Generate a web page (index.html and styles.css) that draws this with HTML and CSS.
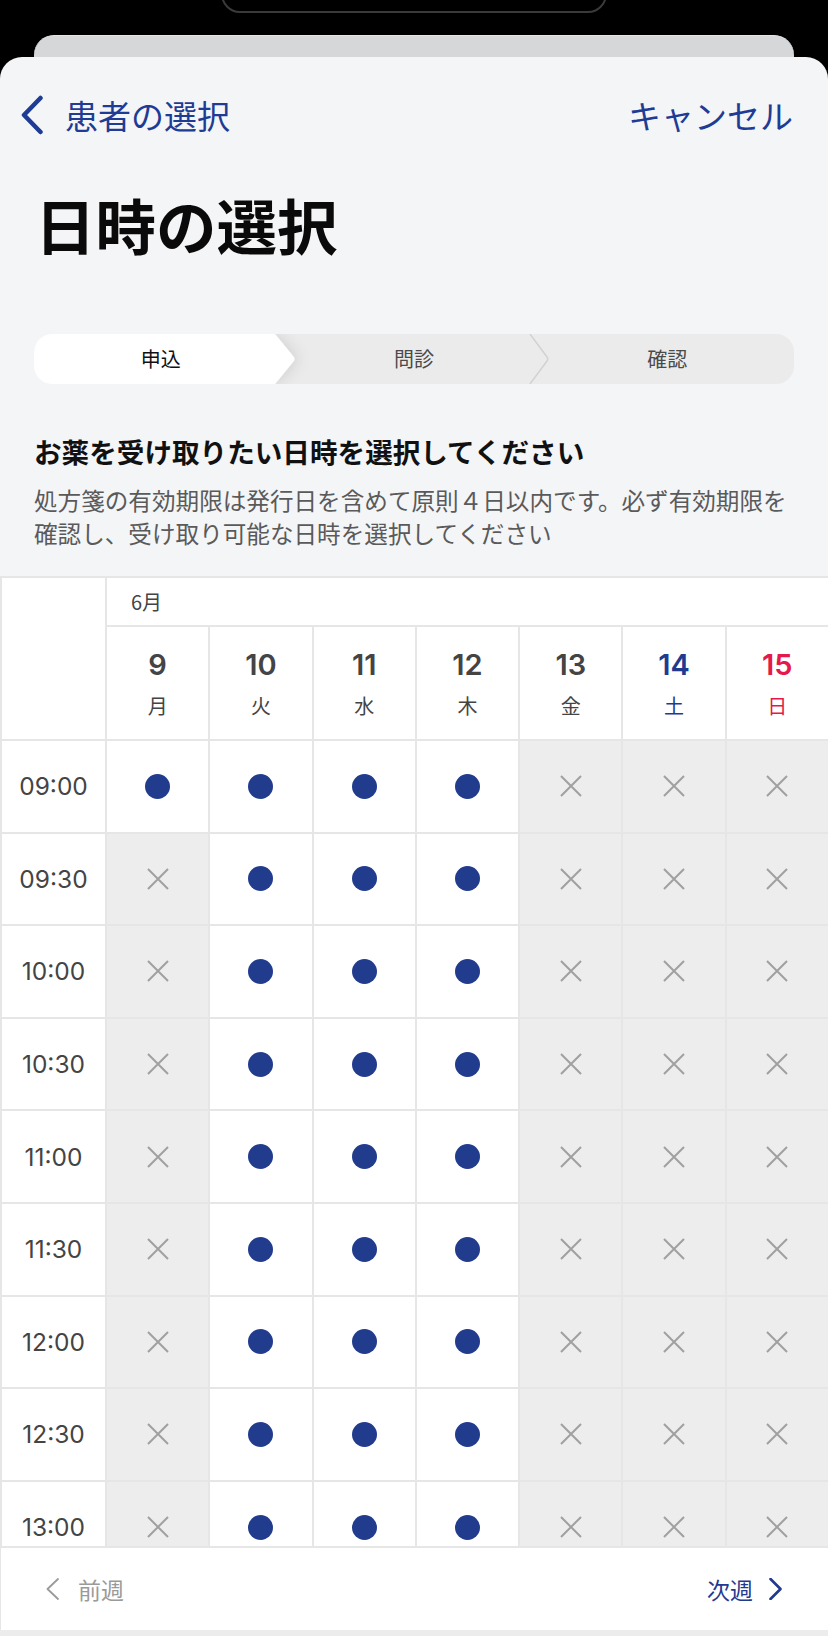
FILE: index.html
```html
<!DOCTYPE html>
<html lang="ja">
<head>
<meta charset="utf-8">
<title>日時の選択</title>
<link rel="stylesheet" href="styles.css">
</head>
<body>
<div class="device">
  <div class="notch"></div>
  <div class="back-card"></div>
  <div class="sheet">
    <nav class="nav">
      <a class="nav-back">
        <svg class="nav-chevron" width="24" height="40" viewBox="0 0 24 40"><path d="M20.5 3 L4 20 L20.5 37" fill="none" stroke="currentColor" stroke-width="4.5" stroke-linecap="round" stroke-linejoin="round"/></svg>
        <span>患者の選択</span>
      </a>
      <a class="nav-cancel">キャンセル</a>
    </nav>

    <h1 class="title">日時の選択</h1>

    <div class="steps">
      <svg class="steps-bg" width="760" height="50" viewBox="0 0 760 50">
        <defs>
          <filter id="sh" x="-10%" y="-50%" width="130%" height="200%">
            <feDropShadow dx="4" dy="0" stdDeviation="7" flood-color="#000" flood-opacity="0.10"/>
          </filter>
        </defs>
        <path d="M0 0 H241 L259.5 22.5 Q261.5 25 259.5 27.5 L241 50 H0 Z" fill="#fff" filter="url(#sh)"/>
        <path d="M496 0 L513 23 Q514.5 25 513 27 L496 50" fill="none" stroke="#d2d2d2" stroke-width="1.5"/>
      </svg>
      <div class="step step-active">申込</div>
      <div class="step">問診</div>
      <div class="step">確認</div>
    </div>

    <h2 class="lead">お薬を受け取りたい日時を選択してください</h2>
    <p class="note">処方箋の有効期限は発行日を含めて原則４日以内です。必ず有効期限を確認し、受け取り可能な日時を選択してください</p>

    <div class="table-wrap">
      <div class="grid">
        <div class="corner"></div>
        <div class="month">6月</div>

        <div class="day"><span class="day-num">9</span><span class="day-wk">月</span></div>
        <div class="day"><span class="day-num">10</span><span class="day-wk">火</span></div>
        <div class="day"><span class="day-num">11</span><span class="day-wk">水</span></div>
        <div class="day"><span class="day-num">12</span><span class="day-wk">木</span></div>
        <div class="day"><span class="day-num">13</span><span class="day-wk">金</span></div>
        <div class="day day-sat"><span class="day-num">14</span><span class="day-wk">土</span></div>
        <div class="day day-sun"><span class="day-num">15</span><span class="day-wk">日</span></div>

        <div class="time">09:00</div>
        <div class="slot ok"><i class="dot"></i></div>
        <div class="slot ok"><i class="dot"></i></div>
        <div class="slot ok"><i class="dot"></i></div>
        <div class="slot ok"><i class="dot"></i></div>
        <div class="slot ng"><svg class="x" viewBox="0 0 22 22"><path d="M1 1 L21 21 M21 1 L1 21"/></svg></div>
        <div class="slot ng"><svg class="x" viewBox="0 0 22 22"><path d="M1 1 L21 21 M21 1 L1 21"/></svg></div>
        <div class="slot ng"><svg class="x" viewBox="0 0 22 22"><path d="M1 1 L21 21 M21 1 L1 21"/></svg></div>

        <div class="time">09:30</div>
        <div class="slot ng"><svg class="x" viewBox="0 0 22 22"><path d="M1 1 L21 21 M21 1 L1 21"/></svg></div>
        <div class="slot ok"><i class="dot"></i></div>
        <div class="slot ok"><i class="dot"></i></div>
        <div class="slot ok"><i class="dot"></i></div>
        <div class="slot ng"><svg class="x" viewBox="0 0 22 22"><path d="M1 1 L21 21 M21 1 L1 21"/></svg></div>
        <div class="slot ng"><svg class="x" viewBox="0 0 22 22"><path d="M1 1 L21 21 M21 1 L1 21"/></svg></div>
        <div class="slot ng"><svg class="x" viewBox="0 0 22 22"><path d="M1 1 L21 21 M21 1 L1 21"/></svg></div>

        <div class="time">10:00</div>
        <div class="slot ng"><svg class="x" viewBox="0 0 22 22"><path d="M1 1 L21 21 M21 1 L1 21"/></svg></div>
        <div class="slot ok"><i class="dot"></i></div>
        <div class="slot ok"><i class="dot"></i></div>
        <div class="slot ok"><i class="dot"></i></div>
        <div class="slot ng"><svg class="x" viewBox="0 0 22 22"><path d="M1 1 L21 21 M21 1 L1 21"/></svg></div>
        <div class="slot ng"><svg class="x" viewBox="0 0 22 22"><path d="M1 1 L21 21 M21 1 L1 21"/></svg></div>
        <div class="slot ng"><svg class="x" viewBox="0 0 22 22"><path d="M1 1 L21 21 M21 1 L1 21"/></svg></div>

        <div class="time">10:30</div>
        <div class="slot ng"><svg class="x" viewBox="0 0 22 22"><path d="M1 1 L21 21 M21 1 L1 21"/></svg></div>
        <div class="slot ok"><i class="dot"></i></div>
        <div class="slot ok"><i class="dot"></i></div>
        <div class="slot ok"><i class="dot"></i></div>
        <div class="slot ng"><svg class="x" viewBox="0 0 22 22"><path d="M1 1 L21 21 M21 1 L1 21"/></svg></div>
        <div class="slot ng"><svg class="x" viewBox="0 0 22 22"><path d="M1 1 L21 21 M21 1 L1 21"/></svg></div>
        <div class="slot ng"><svg class="x" viewBox="0 0 22 22"><path d="M1 1 L21 21 M21 1 L1 21"/></svg></div>

        <div class="time">11:00</div>
        <div class="slot ng"><svg class="x" viewBox="0 0 22 22"><path d="M1 1 L21 21 M21 1 L1 21"/></svg></div>
        <div class="slot ok"><i class="dot"></i></div>
        <div class="slot ok"><i class="dot"></i></div>
        <div class="slot ok"><i class="dot"></i></div>
        <div class="slot ng"><svg class="x" viewBox="0 0 22 22"><path d="M1 1 L21 21 M21 1 L1 21"/></svg></div>
        <div class="slot ng"><svg class="x" viewBox="0 0 22 22"><path d="M1 1 L21 21 M21 1 L1 21"/></svg></div>
        <div class="slot ng"><svg class="x" viewBox="0 0 22 22"><path d="M1 1 L21 21 M21 1 L1 21"/></svg></div>

        <div class="time">11:30</div>
        <div class="slot ng"><svg class="x" viewBox="0 0 22 22"><path d="M1 1 L21 21 M21 1 L1 21"/></svg></div>
        <div class="slot ok"><i class="dot"></i></div>
        <div class="slot ok"><i class="dot"></i></div>
        <div class="slot ok"><i class="dot"></i></div>
        <div class="slot ng"><svg class="x" viewBox="0 0 22 22"><path d="M1 1 L21 21 M21 1 L1 21"/></svg></div>
        <div class="slot ng"><svg class="x" viewBox="0 0 22 22"><path d="M1 1 L21 21 M21 1 L1 21"/></svg></div>
        <div class="slot ng"><svg class="x" viewBox="0 0 22 22"><path d="M1 1 L21 21 M21 1 L1 21"/></svg></div>

        <div class="time">12:00</div>
        <div class="slot ng"><svg class="x" viewBox="0 0 22 22"><path d="M1 1 L21 21 M21 1 L1 21"/></svg></div>
        <div class="slot ok"><i class="dot"></i></div>
        <div class="slot ok"><i class="dot"></i></div>
        <div class="slot ok"><i class="dot"></i></div>
        <div class="slot ng"><svg class="x" viewBox="0 0 22 22"><path d="M1 1 L21 21 M21 1 L1 21"/></svg></div>
        <div class="slot ng"><svg class="x" viewBox="0 0 22 22"><path d="M1 1 L21 21 M21 1 L1 21"/></svg></div>
        <div class="slot ng"><svg class="x" viewBox="0 0 22 22"><path d="M1 1 L21 21 M21 1 L1 21"/></svg></div>

        <div class="time">12:30</div>
        <div class="slot ng"><svg class="x" viewBox="0 0 22 22"><path d="M1 1 L21 21 M21 1 L1 21"/></svg></div>
        <div class="slot ok"><i class="dot"></i></div>
        <div class="slot ok"><i class="dot"></i></div>
        <div class="slot ok"><i class="dot"></i></div>
        <div class="slot ng"><svg class="x" viewBox="0 0 22 22"><path d="M1 1 L21 21 M21 1 L1 21"/></svg></div>
        <div class="slot ng"><svg class="x" viewBox="0 0 22 22"><path d="M1 1 L21 21 M21 1 L1 21"/></svg></div>
        <div class="slot ng"><svg class="x" viewBox="0 0 22 22"><path d="M1 1 L21 21 M21 1 L1 21"/></svg></div>

        <div class="time">13:00</div>
        <div class="slot ng"><svg class="x" viewBox="0 0 22 22"><path d="M1 1 L21 21 M21 1 L1 21"/></svg></div>
        <div class="slot ok"><i class="dot"></i></div>
        <div class="slot ok"><i class="dot"></i></div>
        <div class="slot ok"><i class="dot"></i></div>
        <div class="slot ng"><svg class="x" viewBox="0 0 22 22"><path d="M1 1 L21 21 M21 1 L1 21"/></svg></div>
        <div class="slot ng"><svg class="x" viewBox="0 0 22 22"><path d="M1 1 L21 21 M21 1 L1 21"/></svg></div>
        <div class="slot ng"><svg class="x" viewBox="0 0 22 22"><path d="M1 1 L21 21 M21 1 L1 21"/></svg></div>
      </div>
    </div>

    <footer class="pager">
      <a class="pager-prev">
        <svg class="pager-chev" width="13" height="22" viewBox="0 0 13 22"><path d="M12 1 L1.5 11 L12 21" fill="none" stroke="currentColor" stroke-width="1.8" stroke-linecap="round" stroke-linejoin="round"/></svg>
        <span>前週</span>
      </a>
      <a class="pager-next">
        <span>次週</span>
        <svg class="pager-chev" width="13" height="22" viewBox="0 0 13 22"><path d="M1.5 1 L11.5 11 L1.5 21" fill="none" stroke="currentColor" stroke-width="2.6" stroke-linecap="round" stroke-linejoin="round"/></svg>
      </a>
    </footer>
    <div class="home-strip"></div>
  </div>
</div>
</body>
</html>
```
FILE: styles.css
```css
* { box-sizing: border-box; }
html, body {
  margin: 0;
  padding: 0;
  background: #000;
}
body {
  width: 828px;
  height: 1636px;
  overflow: hidden;
  font-family: "Noto Sans CJK JP", "Noto Sans", sans-serif;
  color: #111;
}
.device {
  width: 828px;
  height: 1636px;
  display: flex;
  flex-direction: column;
  background: #000;
}
.notch {
  width: 386px;
  height: 38px;
  margin: -25px auto 22px;
  border: 2px solid #3a3a3a;
  border-radius: 30px;
  flex: none;
}
.back-card {
  flex: none;
  height: 22px;
  margin: 0 34px;
  background: #d6d7d9;
  border-radius: 20px 20px 0 0;
  border-top: 1px solid #e4e5e7;
}
.sheet {
  flex: 1;
  min-height: 0;
  display: flex;
  flex-direction: column;
  background: #f4f5f7;
  border-radius: 22px 22px 0 0;
  overflow: hidden;
}

/* nav */
.nav {
  flex: none;
  display: flex;
  justify-content: space-between;
  align-items: center;
  height: 40px;
  margin-top: 38px;
  padding: 0 35px 0 20px;
  color: #1f3c94;
  font-size: 33px;
  line-height: 40px;
}
.nav-back {
  display: flex;
  align-items: center;
  gap: 21px;
}
.nav-chevron { display: block; }

/* title */
.title {
  flex: none;
  margin: 53px 0 0;
  padding-left: 35px;
  font-size: 60.5px;
  line-height: 72px;
  font-weight: 700;
  color: #0a0a0a;
}

/* steps */
.steps {
  flex: none;
  position: relative;
  display: flex;
  height: 50px;
  margin: 74px 34px 0;
  background: #ebebeb;
  border-radius: 18px;
  overflow: hidden;
}
.steps-bg {
  position: absolute;
  left: 0;
  top: 0;
}
.step {
  position: relative;
  flex: 1;
  text-align: center;
  font-size: 20px;
  line-height: 50px;
  color: #4a4a4a;
}
.step-active { color: #111; }

/* lead */
.lead {
  flex: none;
  margin: 49px 0 0;
  padding: 0 36px 0 34px;
  font-size: 27.6px;
  line-height: 36px;
  font-weight: 700;
  color: #111;
}
.note {
  flex: none;
  margin: 15px 0 0;
  padding: 0 34px 0 34px;
  font-size: 23.6px;
  line-height: 33px;
  color: #5a5a5a;
}

/* table */
.table-wrap {
  flex: 1;
  min-height: 0;
  overflow: hidden;
  margin-top: 26px;
  background: #e6e6e6;
}
.grid {
  display: grid;
  grid-template-columns: 103px repeat(7, 1fr);
  grid-template-rows: 47px 112px;
  grid-auto-rows: 90.6px;
  gap: 2px;
  padding: 2px 0 0 2px;
  background: #e6e6e6;
}
.corner {
  grid-row: 1 / span 2;
  background: #fff;
}
.month {
  grid-column: 2 / -1;
  background: #fff;
  padding-left: 24px;
  font-size: 20px;
  line-height: 47px;
  color: #444;
}
.day {
  background: #fff;
  display: flex;
  flex-direction: column;
  align-items: center;
  justify-content: center;
  gap: 12px;
  color: #444;
}
.day-num {
  font-family: Inter, "Noto Sans CJK JP", sans-serif;
  font-size: 29px;
  line-height: 34px;
  font-weight: 600;
}
.day-wk {
  font-size: 20px;
  line-height: 24px;
}
.day-sat { color: #1f3a8f; }
.day-sun { color: #e5194a; }
.time {
  background: #fff;
  display: flex;
  align-items: center;
  justify-content: center;
  font-family: Inter, "Noto Sans CJK JP", sans-serif;
  font-size: 24.5px;
  font-weight: 400;
  color: #444;
}
.slot {
  display: flex;
  align-items: center;
  justify-content: center;
}
.slot.ok { background: #fff; }
.slot.ng { background: #ededed; }
.dot {
  display: block;
  width: 25px;
  height: 25px;
  border-radius: 50%;
  background: #213b8d;
}
.x {
  display: block;
  width: 22px;
  height: 22px;
  stroke: #a0a0a0;
  stroke-width: 2;
  fill: none;
}

/* pager */
.pager {
  flex: none;
  height: 84px;
  display: flex;
  justify-content: space-between;
  align-items: center;
  padding: 0 46px 0 45px;
  background: #fff;
  border-top: 2px solid #e6e6e6;
  border-left: 1px solid #e6e6e6;
  font-size: 23px;
}
.pager-prev {
  display: flex;
  align-items: center;
  gap: 19px;
  color: #9a9a9a;
}
.pager-next {
  display: flex;
  align-items: center;
  gap: 16px;
  color: #1f3a8f;
}
.pager-chev { display: block; }
.home-strip {
  flex: none;
  height: 6px;
  background: #ececec;
}
```
